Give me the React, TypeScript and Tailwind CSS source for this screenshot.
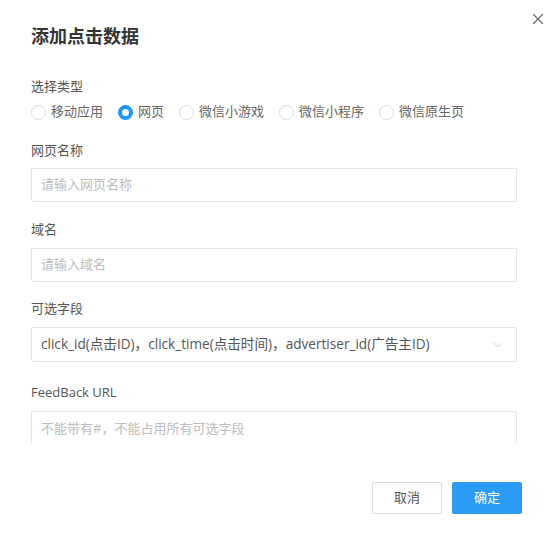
import { X, ChevronDown } from 'lucide-react'

const types = [
  { label: '移动应用', checked: false },
  { label: '网页', checked: true },
  { label: '微信小游戏', checked: false },
  { label: '微信小程序', checked: false },
  { label: '微信原生页', checked: false },
]

function Label({ children, className = '' }: { children: React.ReactNode; className?: string }) {
  return <p className={`text-[13px] leading-5 text-[#555] ${className}`}>{children}</p>
}

function Input({ placeholder }: { placeholder: string }) {
  return (
    <div className="h-[34px] w-full border border-[#e4e4e4] rounded-[2px] flex items-center px-[9px] text-[13px] text-[#bdbdbd]">
      {placeholder}
    </div>
  )
}

export default function App() {
  return (
    <div
      className="relative w-[548px] h-[547px] bg-white overflow-hidden"
      style={{ fontFamily: '"Open Sans", "Noto Sans CJK SC", sans-serif' }}
    >
      {/* Close */}
      <button className="absolute right-[1px] top-[10px] text-[#666]">
        <X size={18} strokeWidth={1.6} />
      </button>

      {/* Body */}
      <div className="px-[31px] pt-[24px] h-[443px] overflow-hidden">
        <h2 className="text-[18px] leading-6 font-bold text-[#333]">添加点击数据</h2>

        <Label className="mt-[28px]">选择类型</Label>
        <div className="flex items-center mt-[6px] h-5">
          {types.map((t) => (
            <label key={t.label} className="flex items-center mr-[15px] text-[13px] text-[#666]">
              {t.checked ? (
                <span className="w-[15px] h-[15px] rounded-full border-[4px] border-[#2196f3] bg-white" />
              ) : (
                <span className="w-[15px] h-[15px] rounded-full border border-[#dcdcdc] bg-white" />
              )}
              <span className="ml-[5px]">{t.label}</span>
            </label>
          ))}
        </div>

        <Label className="mt-[18px] mb-[8px]">网页名称</Label>
        <Input placeholder="请输入网页名称" />

        <Label className="mt-[17px] mb-[9px]">域名</Label>
        <Input placeholder="请输入域名" />

        <Label className="mt-[16px] mb-[9px]">可选字段</Label>
        <div className="h-[35px] w-full border border-[#e4e4e4] rounded-[2px] flex items-center justify-between pl-[9px] pr-[11px]">
          <span className="text-[13.6px] text-[#555] whitespace-nowrap">
            click_id(点击ID)，click_time(点击时间)，advertiser_id(广告主ID)
          </span>
          <ChevronDown size={14} strokeWidth={1.2} className="text-[#bbb]" />
        </div>

        <Label className="mt-[20px] mb-[9px]">FeedBack URL</Label>
        <div className="h-[60px] w-full border border-[#e4e4e4] rounded-[2px] px-[9px] pt-[7px] text-[13px] text-[#bdbdbd]">
          不能带有#，不能占用所有可选字段
        </div>
      </div>

      {/* Footer */}
      <div className="flex justify-end gap-[10px] pr-[26px] mt-[39px]">
        <button className="w-[70px] h-[32px] border border-[#dedede] rounded-[2px] text-[13px] text-[#555] bg-white">
          取消
        </button>
        <button className="w-[70px] h-[32px] rounded-[2px] text-[13px] text-white bg-[#2b9bf4]">
          确定
        </button>
      </div>
    </div>
  )
}
